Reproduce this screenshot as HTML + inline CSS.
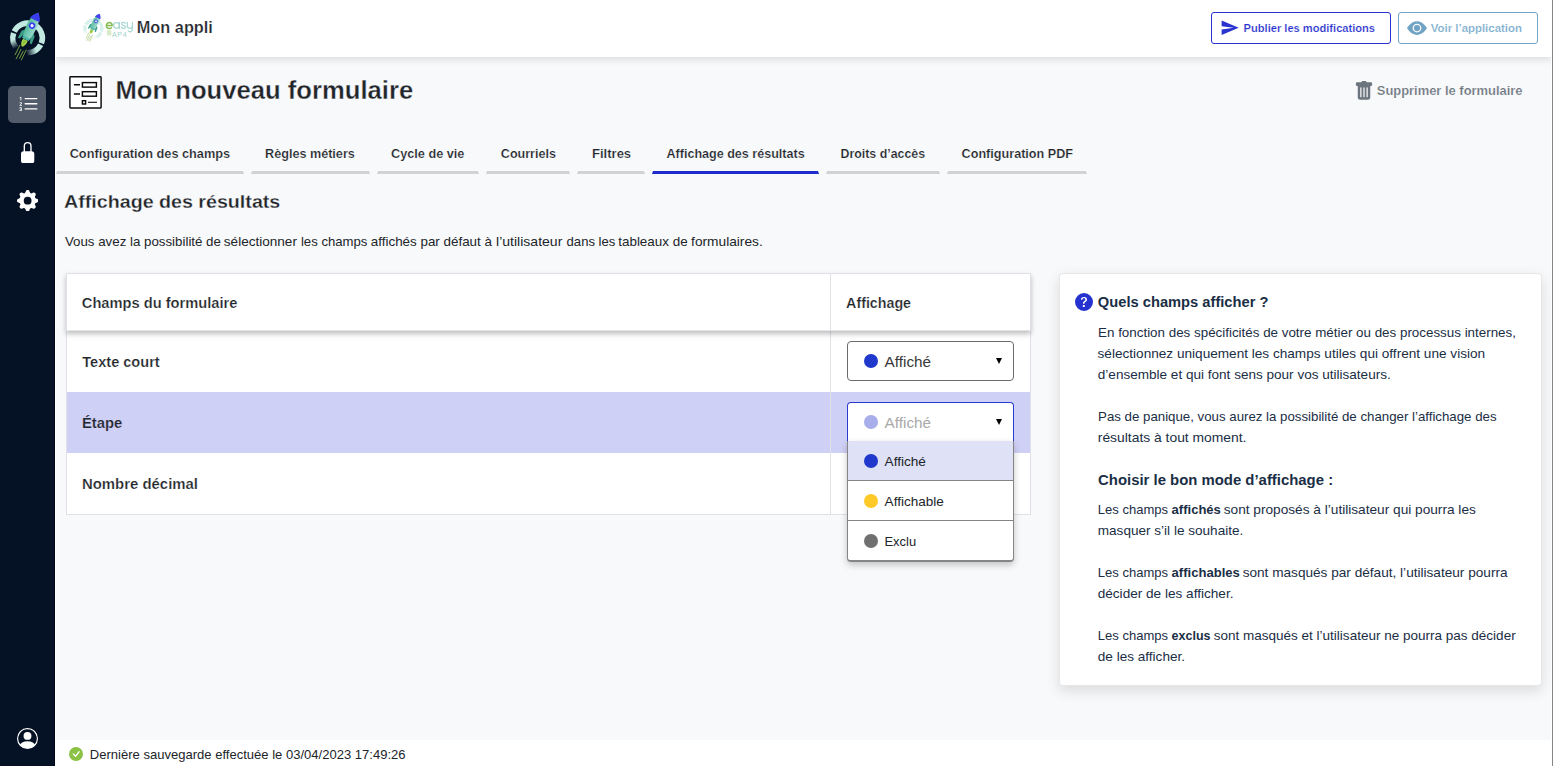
<!DOCTYPE html>
<html lang="fr">
<head>
<meta charset="utf-8">
<title>Mon appli</title>
<style>
*{box-sizing:border-box}
html,body{margin:0;padding:0}
body{width:1553px;height:766px;overflow:hidden;background:#f8f9fb;font-family:"Liberation Sans",sans-serif;position:relative}
.abs{position:absolute}
.t{position:absolute;white-space:nowrap;line-height:1;transform-origin:0 0;font-family:"Liberation Sans",sans-serif}
.t b{font-weight:700}
#sidebar{left:0;top:0;width:55px;height:766px;background:#051125}
#sideedge{left:54px;top:0;width:1px;height:766px;background:#01061a}
#whiteline{left:55px;top:0;width:1px;height:766px;background:#fff}
#header{left:55px;top:0;width:1497px;height:57px;background:#fff;box-shadow:0 2px 8px rgba(0,0,0,.13)}
#footer{left:55px;top:740px;width:1497px;height:26px;background:#fff}
#rightedge{left:1552px;top:0;width:1px;height:766px;background:#858585}
#rightwhite{left:1551px;top:0;width:1px;height:766px;background:#fff}
.navact{left:8px;top:86px;width:38px;height:37px;border-radius:5px;background:#525b6a}
.btn{top:12px;height:32px;border-radius:3px;background:#fff}
#btn1{left:1211px;width:180px;border:1px solid #2a32d0}
#btn2{left:1398px;width:140px;border:1px solid #6fa5c6}
.tabline{top:171px;height:3px;background:#d2d2d2;clip-path:polygon(1px 0,calc(100% - 1px) 0,100% 100%,0 100%)}
.tabline.act{background:#1f2bcc}
#table{left:66px;top:273px;width:965px;height:242px;background:#fff;border:1px solid #dfe1e6}
#thead{left:66px;top:273px;width:965px;height:58px;background:#fff;border:1px solid #dfe1e6;border-bottom:1px solid #e4e5e8;box-shadow:0 3px 5px rgba(0,0,0,.25)}
#coldiv{left:830px;top:274px;width:1px;height:240px;background:#dfe1e6}
#rowhi{left:67px;top:392px;width:963px;height:61px;background:#cfd0f5}
.sel{left:847px;width:167px;height:40px;background:#fff;border:1px solid #6b6b6b;border-radius:4px}
#sel2{border:1px solid #2a3bd0;border-bottom:none;background:#fff;border-radius:4px 4px 0 0;height:39px}
.dot{width:14px;height:14px;border-radius:50%}
.arrow{width:0;height:0;border-left:3.3px solid transparent;border-right:3.3px solid transparent;border-top:6.8px solid #000}
#dd{left:847px;top:441px;width:167px;height:121px;background:#fff;border:1px solid #858585;border-bottom:2px solid #858585;border-top:none;border-radius:0 0 4px 4px;box-shadow:0 3px 7px rgba(0,0,0,.22)}
#dd1{left:848px;top:441px;width:165px;height:39px;background:#dfe1f7}
.ddsep{left:848px;width:165px;height:1px;background:#858585}
#panel{left:1059px;top:273px;width:483px;height:413px;background:#fff;border:1px solid rgba(0,0,0,.095);border-radius:4px;box-shadow:0 5px 14px rgba(0,0,0,.12)}
</style>
</head>
<body>
<div id="header" class="abs"></div>
<div id="footer" class="abs"></div>
<div id="sidebar" class="abs"></div>
<div id="sideedge" class="abs"></div>
<div id="whiteline" class="abs"></div>
<div id="rightwhite" class="abs"></div>
<div id="rightedge" class="abs"></div>

<div id="btn1" class="abs btn"></div>
<div id="btn2" class="abs btn"></div>
<svg class="abs" style="left:0;top:0" width="160" height="70" viewBox="0 0 160 70">
<defs>
<linearGradient id="bodyg" x1="0" y1="0" x2="1" y2="0"><stop offset="0" stop-color="#4fb899"/><stop offset="1" stop-color="#9adacf"/></linearGradient>
<linearGradient id="fadeL" gradientUnits="userSpaceOnUse" x1="12.89" y1="40.06" x2="16.55" y2="47.9"><stop offset="0" stop-color="#c2e9e1" stop-opacity="1"/><stop offset="1" stop-color="#c2e9e1" stop-opacity="0"/></linearGradient>
<linearGradient id="fadeR" gradientUnits="userSpaceOnUse" x1="36.04" y1="50.12" x2="26.26" y2="52.74"><stop offset="0" stop-color="#c2e9e1" stop-opacity="1"/><stop offset="1" stop-color="#c2e9e1" stop-opacity="0"/></linearGradient>
</defs>
<g>
  <path d="M14.25,31.51 A14.8 14.8 0 0 1 41.37,43.30" fill="none" stroke="#c2e9e1" stroke-width="5.6"/>
  <path d="M13.60,33.06 A14.8 14.8 0 0 0 18.04,49.34" fill="none" stroke="url(#fadeL)" stroke-width="5.6"/>
  <path d="M40.68,44.83 A14.8 14.8 0 0 1 24.98,52.57" fill="none" stroke="url(#fadeR)" stroke-width="5.6"/>
</g>
<g>
  <g stroke="#84b445" stroke-width=".85" stroke-linecap="round" fill="none">
    <path d="M19.9,45.3 L15.1,54.8"/><path d="M21,49.3 L16.2,58.8"/><path d="M23.2,51.1 L19.5,58.2"/><path d="M26.1,50 L21.4,59.9"/>
  </g>
  <g transform="translate(31.8,26.2) rotate(25.5)">
    <!-- fins -->
    <path d="M-4.4,5.5 L-7.2,8.6 L-7.6,16.4 L-5.6,16.4 L-3.8,11 Z" fill="#3a9e89"/>
    <path d="M4.4,5.5 L7.2,8.6 L7.6,16.4 L5.6,16.4 L3.8,11 Z" fill="#3a9e89"/>
    <!-- flame -->
    <path d="M-2.5,15 C-3.3,18 -2,21.8 0,22.8 C2,21.8 3.3,18 2.5,15 Z" fill="#a7d04b"/>
    <path d="M-1.1,16 C-1.5,18 -0.9,20 0,20.6 C0.9,20 1.5,18 1.1,16 Z" fill="#8cc23f"/>
    <!-- body -->
    <path d="M0,-14.8 C5.9,-9.5 6.3,2 3.4,14.6 L-3.4,14.6 C-6.3,2 -5.9,-9.5 0,-14.8 Z" fill="url(#bodyg)"/>
    <path d="M-3.9,12.2 L3.9,12.2 L3.4,14.6 L-3.4,14.6 Z" fill="#45b3a5"/>
    <!-- nose -->
    <path d="M0,-15 C3,-12.4 4.6,-9.8 5.15,-7.2 Q0,-6.3 -5.15,-7.2 C-4.6,-9.8 -3,-12.4 0,-15 Z" fill="#3a3cf0"/>
    <!-- window -->
    <circle cx="0" cy="-0.6" r="3.2" fill="#3a3cf0"/>
    <circle cx="0" cy="-0.6" r="1.6" fill="#f4f4ff"/>
  </g>
</g>
<g transform="translate(93.4,28.5) scale(.582) translate(-27.55,-38)"><g opacity=".62">
  <path d="M14.25,31.51 A14.8 14.8 0 0 1 41.37,43.30" fill="none" stroke="#c2e9e1" stroke-width="5.6"/>
  <path d="M13.60,33.06 A14.8 14.8 0 0 0 18.04,49.34" fill="none" stroke="url(#fadeL)" stroke-width="5.6"/>
  <path d="M40.68,44.83 A14.8 14.8 0 0 1 24.98,52.57" fill="none" stroke="url(#fadeR)" stroke-width="5.6"/>
</g><g opacity=".95">
  <g stroke="#84b445" stroke-width=".85" stroke-linecap="round" fill="none">
    <path d="M19.9,45.3 L15.1,54.8"/><path d="M21,49.3 L16.2,58.8"/><path d="M23.2,51.1 L19.5,58.2"/><path d="M26.1,50 L21.4,59.9"/>
  </g>
  <g transform="translate(31.8,26.2) rotate(25.5)">
    <!-- fins -->
    <path d="M-4.4,5.5 L-7.2,8.6 L-7.6,16.4 L-5.6,16.4 L-3.8,11 Z" fill="#3a9e89"/>
    <path d="M4.4,5.5 L7.2,8.6 L7.6,16.4 L5.6,16.4 L3.8,11 Z" fill="#3a9e89"/>
    <!-- flame -->
    <path d="M-2.5,15 C-3.3,18 -2,21.8 0,22.8 C2,21.8 3.3,18 2.5,15 Z" fill="#a7d04b"/>
    <path d="M-1.1,16 C-1.5,18 -0.9,20 0,20.6 C0.9,20 1.5,18 1.1,16 Z" fill="#8cc23f"/>
    <!-- body -->
    <path d="M0,-14.8 C5.9,-9.5 6.3,2 3.4,14.6 L-3.4,14.6 C-6.3,2 -5.9,-9.5 0,-14.8 Z" fill="url(#bodyg)"/>
    <path d="M-3.9,12.2 L3.9,12.2 L3.4,14.6 L-3.4,14.6 Z" fill="#45b3a5"/>
    <!-- nose -->
    <path d="M0,-15 C3,-12.4 4.6,-9.8 5.15,-7.2 Q0,-6.3 -5.15,-7.2 C-4.6,-9.8 -3,-12.4 0,-15 Z" fill="#3a3cf0"/>
    <!-- window -->
    <circle cx="0" cy="-0.6" r="3.2" fill="#3a3cf0"/>
    <circle cx="0" cy="-0.6" r="1.6" fill="#f4f4ff"/>
  </g>
</g></g>
</svg>
<!-- active nav box -->
<div class="abs navact"></div>
<!-- list-ol icon -->
<svg class="abs" style="left:17.8px;top:94px" width="20.8" height="20.8" viewBox="0 0 16 16" fill="#fff">
<path fill-rule="evenodd" d="M5 11.5a.5.5 0 0 1 .5-.5h9a.5.5 0 0 1 0 1h-9a.5.5 0 0 1-.5-.5zm0-4a.5.5 0 0 1 .5-.5h9a.5.5 0 0 1 0 1h-9a.5.5 0 0 1-.5-.5zm0-4a.5.5 0 0 1 .5-.5h9a.5.5 0 0 1 0 1h-9a.5.5 0 0 1-.5-.5z"/>
<path d="M1.713 11.865v-.474H2c.217 0 .363-.137.363-.317 0-.185-.158-.31-.361-.31-.223 0-.367.152-.373.31h-.59c.016-.467.373-.787.986-.787.588-.002.954.291.957.703a.595.595 0 0 1-.492.594v.033a.615.615 0 0 1 .569.631c.003.533-.502.8-1.051.8-.656 0-1-.37-1.008-.794h.582c.008.178.186.306.422.309.254 0 .424-.145.422-.35-.002-.195-.155-.348-.414-.348h-.3zm-.004-4.699h-.604v-.035c0-.408.295-.844.958-.844.583 0 .96.326.96.756 0 .389-.257.617-.476.848l-.537.572v.03h1.054V9H1.143v-.395l.957-.99c.138-.142.293-.304.293-.508 0-.18-.147-.32-.342-.32a.33.33 0 0 0-.342.338v.041zM2.564 5h-.635V2.924h-.031l-.598.42v-.567l.629-.443h.635V5z"/>
</svg>
<!-- lock -->
<svg class="abs" style="left:16.85px;top:141.7px" width="21.3" height="21.3" viewBox="0 0 16 16" fill="#fff">
<path d="M8 1a2 2 0 0 1 2 2v4H6V3a2 2 0 0 1 2-2zm3 6V3a3 3 0 0 0-6 0v4a2 2 0 0 0-2 2v5a2 2 0 0 0 2 2h6a2 2 0 0 0 2-2V9a2 2 0 0 0-2-2z"/>
</svg>
<!-- gear -->
<svg class="abs" style="left:16.85px;top:189.75px" width="21.3" height="21.3" viewBox="0 0 16 16" fill="#fff">
<path d="M9.405 1.05c-.413-1.4-2.397-1.4-2.81 0l-.1.34a1.464 1.464 0 0 1-2.105.872l-.31-.17c-1.283-.698-2.686.705-1.987 1.987l.169.311c.446.82.023 1.841-.872 2.105l-.34.1c-1.4.413-1.4 2.397 0 2.81l.34.1a1.464 1.464 0 0 1 .872 2.105l-.17.31c-.698 1.283.705 2.686 1.987 1.987l.311-.169a1.464 1.464 0 0 1 2.105.872l.1.34c.413 1.4 2.397 1.4 2.81 0l.1-.34a1.464 1.464 0 0 1 2.105-.872l.31.17c1.283.698 2.686-.705 1.987-1.987l-.169-.311a1.464 1.464 0 0 1 .872-2.105l.34-.1c1.400-.413 1.400-2.397 0-2.810l-.34-.1a1.464 1.464 0 0 1-.872-2.105l.17-.31c.698-1.283-.705-2.686-1.987-1.987l-.311.169a1.464 1.464 0 0 1-2.105-.872l-.1-.34zM8 10.93a2.929 2.929 0 1 1 0-5.860 2.929 2.929 0 0 1 0 5.858z"/>
</svg>
<!-- user -->
<svg class="abs" style="left:17px;top:728px" width="21" height="21" viewBox="0 0 16 16" fill="#fff">
<path d="M11 6a3 3 0 1 1-6 0 3 3 0 0 1 6 0z"/>
<path fill-rule="evenodd" d="M0 8a8 8 0 1 1 16 0A8 8 0 0 1 0 8zm8-7a7 7 0 0 0-5.468 11.37C3.242 11.226 4.805 10 8 10s4.757 1.225 5.468 2.370A7 7 0 0 0 8 1z"/>
</svg>

<!-- easy AP4 wordmark -->
<svg class="abs" style="left:100px;top:15px" width="40" height="26" viewBox="100 15 40 26" fill="none" stroke-linecap="round" stroke-linejoin="round">
<path d="M106.9,25.5 H112.3 A3 3 0 1 0 111.4,27.7" stroke="#82bb50" stroke-width="1.5"/>
<g stroke="#a9d8d2" stroke-width="1.25">
<circle cx="116.5" cy="25.4" r="2.8"/><path d="M119.4,22.3 V28.4"/>
<path d="M125.2,23.4 C124.4,22.1 121.6,22.1 121.6,23.9 C121.6,25.6 125.5,25.1 125.5,27 C125.5,28.9 122,28.8 121.3,27.4"/>
<path d="M127.3,22.3 V25.8 A2.55 2.55 0 0 0 132.4,25.8 M132.4,22.3 V29.4 A2.4 2.4 0 0 1 128.2,30.9"/>
</g>
<rect x="107" y="30.2" width="4.3" height="5.2" fill="#d7e9c6" stroke="none"/>
</svg>
<div class="t" style="left:112px;top:30.6px;font-size:7px;letter-spacing:.7px;color:#9ed2ca;font-weight:400">AP4</div>
<!-- form icon -->
<svg class="abs" style="left:68px;top:75px" width="36" height="36" viewBox="68 75 36 36" fill="none" stroke="#0c0c0c" stroke-width="1.45">
<rect x="69.9" y="76.7" width="31.2" height="31.3" rx=".7" fill="#fff"/>
<path d="M73.9,84.8 H80 M73.9,93.9 H80"/>
<rect x="82.4" y="82.6" width="14" height="4.5" fill="#fff"/>
<rect x="82.4" y="91.7" width="14" height="4.5" fill="#fff"/>
<rect x="82.4" y="100.7" width="3.2" height="3.3" fill="#fff"/>
<path d="M88,102.3 H97" stroke-width="1.1"/>
</svg>
<!-- send icon -->
<svg class="abs" style="left:1219.6px;top:18.2px" width="19.5" height="19.5" viewBox="0 0 24 24" fill="#2a32d0"><path d="M2.01 21L23 12 2.01 3 2 10l15 2-15 2z"/></svg>
<!-- eye icon -->
<svg class="abs" style="left:1407px;top:18px" width="20" height="20" viewBox="0 0 16 16" fill="#70a3c4"><path d="M10.5 8a2.5 2.5 0 1 1-5 0 2.5 2.5 0 0 1 5 0z"/><path d="M0 8s3-5.5 8-5.500S16 8 16 8s-3 5.500-8 5.500S0 8 0 8zm8 3.500a3.500 3.500 0 1 0 0-7 3.500 3.500 0 0 0 0 7z"/></svg>
<!-- trash -->
<svg class="abs" style="left:1354px;top:80.5px" width="20" height="20" viewBox="0 0 16 16" fill="#6c757d"><path d="M2.5 1a1 1 0 0 0-1 1v1a1 1 0 0 0 1 1H3v9a2 2 0 0 0 2 2h6a2 2 0 0 0 2-2V4h.5a1 1 0 0 0 1-1V2a1 1 0 0 0-1-1H10a1 1 0 0 0-1-1H7a1 1 0 0 0-1 1H2.500zm3 4a.5.5 0 0 1 .5.5v7a.5.5 0 0 1-1 0v-7a.5.5 0 0 1 .5-.5zM8 5a.5.5 0 0 1 .5.5v7a.5.5 0 0 1-1 0v-7A.5.5 0 0 1 8 5zm3 .5v7a.5.5 0 0 1-1 0v-7a.5.5 0 0 1 1 0z"/></svg>


<!-- tabs -->
<div class="abs tabline" style="left:56px;width:188px"></div>
<div class="abs tabline" style="left:251px;width:119px"></div>
<div class="abs tabline" style="left:377px;width:102px"></div>
<div class="abs tabline" style="left:486px;width:84px"></div>
<div class="abs tabline" style="left:577px;width:68px"></div>
<div class="abs tabline act" style="left:652px;width:167px"></div>
<div class="abs tabline" style="left:826px;width:114px"></div>
<div class="abs tabline" style="left:947px;width:140px"></div>

<!-- table -->
<div id="table" class="abs"></div>
<div id="rowhi" class="abs"></div>
<div id="coldiv" class="abs"></div>
<div id="thead" class="abs"></div>
<div class="abs" style="left:830px;top:274px;width:1px;height:56px;background:#dfe1e6"></div>

<div id="sel1" class="abs sel" style="top:341px"></div>
<div class="abs dot" style="left:864px;top:354px;background:#2039cc"></div>
<div class="abs arrow" style="left:995.7px;top:358.1px"></div>

<div id="sel2" class="abs sel" style="top:402px"></div>
<div class="abs dot" style="left:864px;top:415px;background:#a7aee9"></div>
<div class="abs arrow" style="left:995.7px;top:419.1px"></div>

<div id="dd" class="abs"></div>
<div id="dd1" class="abs"></div>
<div class="abs ddsep" style="top:480px"></div>
<div class="abs ddsep" style="top:520px"></div>
<div class="abs dot" style="left:864px;top:454px;background:#2039cc"></div>
<div class="abs dot" style="left:864px;top:494px;background:#ffca28"></div>
<div class="abs dot" style="left:864px;top:534px;background:#707070"></div>

<div id="panel" class="abs"></div>

<!-- question -->
<svg class="abs" style="left:1075px;top:293px" width="18" height="18" viewBox="0 0 16 16" fill="#2632d0"><path d="M16 8A8 8 0 1 1 0 8a8 8 0 0 1 16 0zM5.496 6.033h.825c.138 0 .248-.113.266-.25.09-.656.54-1.134 1.342-1.134.686 0 1.314.343 1.314 1.168 0 .635-.374.927-.965 1.371-.673.489-1.206 1.060-1.168 1.987l.003.217a.25.25 0 0 0 .25.246h.811a.25.25 0 0 0 .25-.25v-.105c0-.718.273-.927 1.010-1.486.609-.463 1.244-.977 1.244-2.056 0-1.511-1.276-2.241-2.673-2.241-1.267 0-2.655.59-2.750 2.286a.237.237 0 0 0 .241.247zm2.325 6.443c.61 0 1.029-.394 1.029-.927 0-.552-.42-.94-1.029-.94-.584 0-1.009.388-1.009.94 0 .533.425.927 1.010.927z"/></svg>
<!-- check -->
<svg class="abs" style="left:69px;top:747px" width="14" height="14" viewBox="0 0 16 16" fill="#8bc145"><path d="M16 8A8 8 0 1 1 0 8a8 8 0 0 1 16 0zm-3.970-3.030a.75.75 0 0 0-1.080.022L7.477 9.417 5.384 7.323a.75.750 0 0 0-1.060 1.060L6.970 11.030a.75.750 0 0 0 1.079-.020l3.992-4.990a.75.750 0 0 0-.010-1.050z"/></svg>


<div class="t" style="left:0;top:20px;font-size:16.6px;font-weight:700;color:#212529;-webkit-text-stroke:0.24px #fff;transform:translateX(136.74px) scaleX(0.9836)">Mon appli</div>
<div class="t" style="left:0;top:78px;font-size:25.2px;font-weight:700;color:#212529;-webkit-text-stroke:0.32px #f8f9fb;transform:translateX(115.48px) scaleX(1.0177)">Mon nouveau formulaire</div>
<div class="t" style="left:0;top:147px;font-size:13px;font-weight:700;color:#212529;-webkit-text-stroke:0.2px #f8f9fb;transform:translateX(69.69px) scaleX(0.9783)">Configuration des champs</div>
<div class="t" style="left:0;top:147px;font-size:13px;font-weight:700;color:#212529;-webkit-text-stroke:0.2px #f8f9fb;transform:translateX(265.08px) scaleX(0.9700)">Règles métiers</div>
<div class="t" style="left:0;top:147px;font-size:13px;font-weight:700;color:#212529;-webkit-text-stroke:0.2px #f8f9fb;transform:translateX(391.08px) scaleX(0.9752)">Cycle de vie</div>
<div class="t" style="left:0;top:147px;font-size:13px;font-weight:700;color:#212529;-webkit-text-stroke:0.2px #f8f9fb;transform:translateX(500.83px) scaleX(0.9654)">Courriels</div>
<div class="t" style="left:0;top:147px;font-size:13px;font-weight:700;color:#212529;-webkit-text-stroke:0.2px #f8f9fb;transform:translateX(592.04px) scaleX(1.0015)">Filtres</div>
<div class="t" style="left:0;top:147px;font-size:13px;font-weight:700;color:#212529;-webkit-text-stroke:0.2px #f8f9fb;transform:translateX(666.51px) scaleX(0.9656)">Affichage des résultats</div>
<div class="t" style="left:0;top:147px;font-size:13px;font-weight:700;color:#212529;-webkit-text-stroke:0.2px #f8f9fb;transform:translateX(840.44px) scaleX(0.9522)">Droits d’accès</div>
<div class="t" style="left:0;top:147px;font-size:13px;font-weight:700;color:#212529;-webkit-text-stroke:0.2px #f8f9fb;transform:translateX(961.60px) scaleX(0.9704)">Configuration PDF</div>
<div class="t" style="left:0;top:193px;font-size:18.7px;font-weight:700;color:#212529;-webkit-text-stroke:0.27px #f8f9fb;transform:translateX(64.06px) scaleX(1.0515)">Affichage des résultats</div>
<div class="t" style="left:0;top:235px;font-size:13px;font-weight:400;color:#212529;transform:translateX(64.93px) scaleX(1.0229)">Vous avez la possibilité de</div>
<div class="t" style="left:0;top:235px;font-size:13px;font-weight:400;color:#212529;transform:translateX(223.82px) scaleX(1.0428)">sélectionner</div>
<div class="t" style="left:0;top:235px;font-size:13px;font-weight:400;color:#212529;transform:translateX(300.94px) scaleX(1.0107)">les champs</div>
<div class="t" style="left:0;top:235px;font-size:13px;font-weight:400;color:#212529;transform:translateX(370.82px) scaleX(1.0300)">affichés par défaut à</div>
<div class="t" style="left:0;top:235px;font-size:13px;font-weight:400;color:#212529;transform:translateX(496.09px) scaleX(1.0780)">l’utilisateur</div>
<div class="t" style="left:0;top:235px;font-size:13px;font-weight:400;color:#212529;transform:translateX(566.57px) scaleX(1.0072)">dans les</div>
<div class="t" style="left:0;top:235px;font-size:13px;font-weight:400;color:#212529;transform:translateX(618.23px) scaleX(1.0321)">tableaux de</div>
<div class="t" style="left:0;top:235px;font-size:13px;font-weight:400;color:#212529;transform:translateX(691.11px) scaleX(1.0544)">formulaires.</div>
<div class="t" style="left:0;top:296px;font-size:14px;font-weight:700;color:#212529;-webkit-text-stroke:0.22px #fff;transform:translateX(81.81px) scaleX(1.0472)">Champs du formulaire</div>
<div class="t" style="left:0;top:296px;font-size:14px;font-weight:700;color:#212529;-webkit-text-stroke:0.22px #fff;transform:translateX(846.12px) scaleX(1.0175)">Affichage</div>
<div class="t" style="left:0;top:355px;font-size:14px;font-weight:700;color:#212529;-webkit-text-stroke:0.22px #fff;transform:translateX(82.32px) scaleX(1.0389)">Texte court</div>
<div class="t" style="left:0;top:416px;font-size:14px;font-weight:700;color:#212529;-webkit-text-stroke:0.22px #cfd0f5;transform:translateX(81.91px) scaleX(1.0588)">Étape</div>
<div class="t" style="left:0;top:477px;font-size:14px;font-weight:700;color:#212529;-webkit-text-stroke:0.22px #fff;transform:translateX(81.96px) scaleX(1.0651)">Nombre décimal</div>
<div class="t" style="left:0;top:354px;font-size:15px;font-weight:400;color:#383838;transform:translateX(884.61px) scaleX(1.0187)">Affiché</div>
<div class="t" style="left:0;top:415px;font-size:15px;font-weight:400;color:#a9a9a9;transform:translateX(884.61px) scaleX(1.0187)">Affiché</div>
<div class="t" style="left:0;top:455px;font-size:13px;font-weight:400;color:#212529;transform:translateX(884.60px) scaleX(1.0456)">Affiché</div>
<div class="t" style="left:0;top:495px;font-size:13px;font-weight:400;color:#212529;transform:translateX(884.60px) scaleX(1.0413)">Affichable</div>
<div class="t" style="left:0;top:535px;font-size:13px;font-weight:400;color:#212529;transform:translateX(884.50px) scaleX(0.9927)">Exclu</div>
<div class="t" style="left:0;top:295px;font-size:14px;font-weight:700;color:#1a2e45;transform:translateX(1097.87px) scaleX(1.0488)">Quels champs afficher ?</div>
<div class="t" style="left:0;top:326px;font-size:13px;font-weight:400;color:#1a2e45;transform:translateX(1098.07px) scaleX(1.0290)">En fonction des spécificités de votre métier ou des processus internes,</div>
<div class="t" style="left:0;top:347px;font-size:13px;font-weight:400;color:#1a2e45;transform:translateX(1097.57px) scaleX(1.0460)">sélectionnez uniquement les champs utiles qui offrent une vision</div>
<div class="t" style="left:0;top:368px;font-size:13px;font-weight:400;color:#1a2e45;transform:translateX(1097.83px) scaleX(1.0420)">d’ensemble et qui font sens pour vos utilisateurs.</div>
<div class="t" style="left:0;top:410px;font-size:13px;font-weight:400;color:#1a2e45;transform:translateX(1098.08px) scaleX(1.0197)">Pas de panique, vous aurez la possibilité de changer l’affichage des</div>
<div class="t" style="left:0;top:431px;font-size:13px;font-weight:400;color:#1a2e45;transform:translateX(1097.78px) scaleX(1.0662)">résultats à tout moment.</div>
<div class="t" style="left:0;top:473px;font-size:14px;font-weight:700;color:#1a2e45;transform:translateX(1098.07px) scaleX(1.0639)">Choisir le bon mode d’affichage :</div>
<div class="t" style="left:0;top:503px;font-size:13px;font-weight:400;color:#1a2e45;transform:translateX(1097.86px) scaleX(1.0022)">Les champs</div>
<div class="t" style="left:0;top:503px;font-size:13px;font-weight:700;color:#1a2e45;transform:translateX(1171.60px) scaleX(1.0021)">affichés</div>
<div class="t" style="left:0;top:503px;font-size:13px;font-weight:400;color:#1a2e45;transform:translateX(1223.71px) scaleX(1.0509)">sont proposés à l’utilisateur qui pourra les</div>
<div class="t" style="left:0;top:524px;font-size:13px;font-weight:400;color:#1a2e45;transform:translateX(1097.76px) scaleX(1.0434)">masquer s’il le souhaite.</div>
<div class="t" style="left:0;top:566px;font-size:13px;font-weight:400;color:#1a2e45;transform:translateX(1097.86px) scaleX(1.0022)">Les champs</div>
<div class="t" style="left:0;top:566px;font-size:13px;font-weight:700;color:#1a2e45;transform:translateX(1171.60px) scaleX(1.0052)">affichables</div>
<div class="t" style="left:0;top:566px;font-size:13px;font-weight:400;color:#1a2e45;transform:translateX(1242.64px) scaleX(1.0474)">sont masqués par défaut, l’utilisateur pourra</div>
<div class="t" style="left:0;top:587px;font-size:13px;font-weight:400;color:#1a2e45;transform:translateX(1097.70px) scaleX(1.0454)">décider de les afficher.</div>
<div class="t" style="left:0;top:629px;font-size:13px;font-weight:400;color:#1a2e45;transform:translateX(1097.86px) scaleX(1.0022)">Les champs</div>
<div class="t" style="left:0;top:629px;font-size:13px;font-weight:700;color:#1a2e45;transform:translateX(1171.56px) scaleX(0.9622)">exclus</div>
<div class="t" style="left:0;top:629px;font-size:13px;font-weight:400;color:#1a2e45;transform:translateX(1213.68px) scaleX(1.0395)">sont masqués et l’utilisateur ne pourra pas décider</div>
<div class="t" style="left:0;top:650px;font-size:13px;font-weight:400;color:#1a2e45;transform:translateX(1097.83px) scaleX(1.0429)">de les afficher.</div>
<div class="t" style="left:0;top:23px;font-size:11.2px;font-weight:700;color:#2a33cd;-webkit-text-stroke:0.18px #fff;transform:translateX(1243.57px) scaleX(0.9927)">Publier les modifications</div>
<div class="t" style="left:0;top:23px;font-size:11.2px;font-weight:700;color:#7aadcd;-webkit-text-stroke:0.18px #fff;transform:translateX(1430.76px) scaleX(1.0206)">Voir l’application</div>
<div class="t" style="left:0;top:84px;font-size:13px;font-weight:700;color:#6c757d;-webkit-text-stroke:0.2px #f8f9fb;transform:translateX(1376.78px) scaleX(0.9940)">Supprimer le formulaire</div>
<div class="t" style="left:0;top:748px;font-size:13px;font-weight:400;color:#212529;transform:translateX(89.87px) scaleX(1.0024)">Dernière sauvegarde effectuée le 03/04/2023 17:49:26</div>
</body>
</html>
